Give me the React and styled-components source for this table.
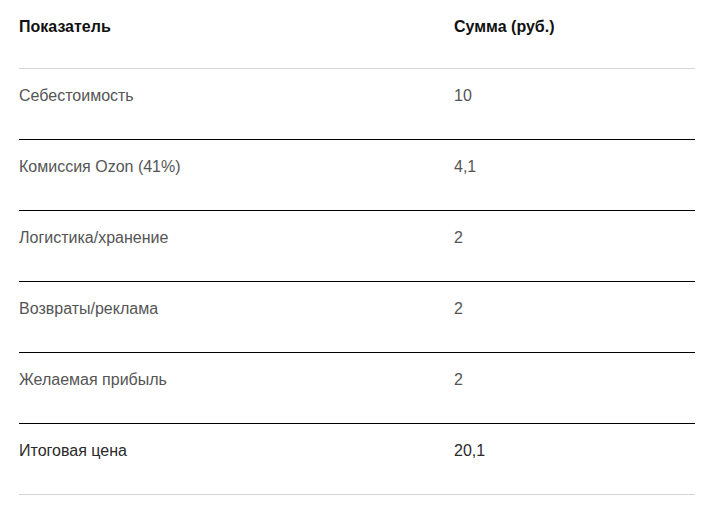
import styled, { createGlobalStyle } from "styled-components";

const GlobalStyle = createGlobalStyle`
  html, body {
    margin: 0;
    padding: 0;
    background: #ffffff;
  }
  body {
    font-family: "Liberation Sans", Arial, sans-serif;
  }
`;

const rows = [
  { name: "Себестоимость", sum: "10" },
  { name: "Комиссия Ozon (41%)", sum: "4,1" },
  { name: "Логистика/хранение", sum: "2" },
  { name: "Возвраты/реклама", sum: "2" },
  { name: "Желаемая прибыль", sum: "2" },
  { name: "Итоговая цена", sum: "20,1", total: true },
];

const Table = styled.div`
  width: 676px;
  margin-left: 19px;
  display: flex;
  flex-direction: column;
`;

const Row = styled.div`
  display: grid;
  grid-template-columns: 435px 1fr;
  padding: 18px 0 ${(p) => (p.$head ? "32px" : "34px")};
  border-bottom: 1px solid ${(p) => (p.$last || p.$head ? "#d4d4d4" : "#000")};
  font-size: 16px;
  line-height: 18px;
`;

const Head = styled.div`
  font-weight: 700;
  color: #111;
`;

const Cell = styled.div`
  color: ${(p) => (p.$total ? "#2a2a2a" : "#555")};
`;

function App() {
  return (
    <>
      <GlobalStyle />
      <Table>
        <Row $head>
          <Head>Показатель</Head>
          <Head>Сумма (руб.)</Head>
        </Row>
        {rows.map(({ name, sum, total }, i) => (
          <Row key={name} $last={i === rows.length - 1}>
            <Cell $total={total}>{name}</Cell>
            <Cell $total={total}>{sum}</Cell>
          </Row>
        ))}
      </Table>
    </>
  );
}

export default App;
